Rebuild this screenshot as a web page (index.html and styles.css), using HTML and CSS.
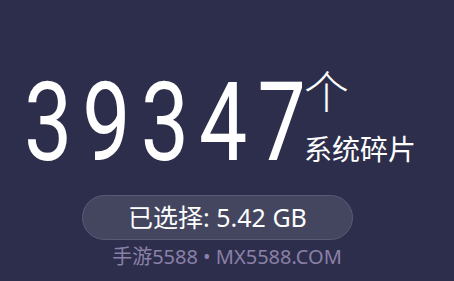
FILE: index.html
```html
<!DOCTYPE html>
<html>
<head>
<meta charset="utf-8">
<link rel="stylesheet" href="styles.css">
</head>
<body>
<main class="screen">
  <div class="count-row">
    <span class="count">3934<span class="last">7</span></span>
    <div class="side">
      <span class="unit">个</span>
      <span class="label">系统碎片</span>
    </div>
  </div>
  <div class="pill">已选择: 5.42 GB</div>
  <div class="mark">手游5588 • MX5588.COM</div>
</main>
</body>
</html>
```
FILE: styles.css
```css
html, body {
  margin: 0;
  padding: 0;
  background: #2d2e4b;
}
.screen {
  width: 454px;
  height: 281px;
  overflow: hidden;
  display: flex;
  flex-direction: column;
  font-family: "Noto Sans", "Noto Sans CJK SC", sans-serif;
  color: #ffffff;
}
.count-row {
  display: flex;
  align-items: stretch;
  margin-top: 70px;
  padding-left: 24px;
  height: 94px;
}
.count {
  font-family: Roboto, sans-serif;
  font-weight: 400;
  font-size: 110px;
  line-height: 106px;
  height: 94px;
  display: inline-block;
  white-space: nowrap;
  transform: scaleX(0.78);
  transform-origin: left center;
  width: 280px;
  flex: none;
  letter-spacing: 13px;
}
.count .last {
  letter-spacing: 0;
}
.side {
  display: flex;
  flex-direction: column;
  justify-content: space-between;
}
.unit {
  font-family: "Noto Sans CJK SC", sans-serif;
  font-weight: 300;
  font-size: 45px;
  line-height: 40px;
}
.label {
  font-family: "Noto Sans CJK SC", sans-serif;
  font-size: 28px;
  line-height: 32px;
}
.pill {
  margin-top: 31px;
  margin-left: 82px;
  width: 269px;
  height: 43px;
  box-sizing: content-box;
  border: 1px solid #585a77;
  border-radius: 23px;
  background: #444660;
  font-size: 25px;
  line-height: 42px;
  text-align: center;
}
.mark {
  margin-top: 4px;
  text-align: center;
  color: #8b80a8;
  font-size: 20px;
  line-height: 26px;
}
```
